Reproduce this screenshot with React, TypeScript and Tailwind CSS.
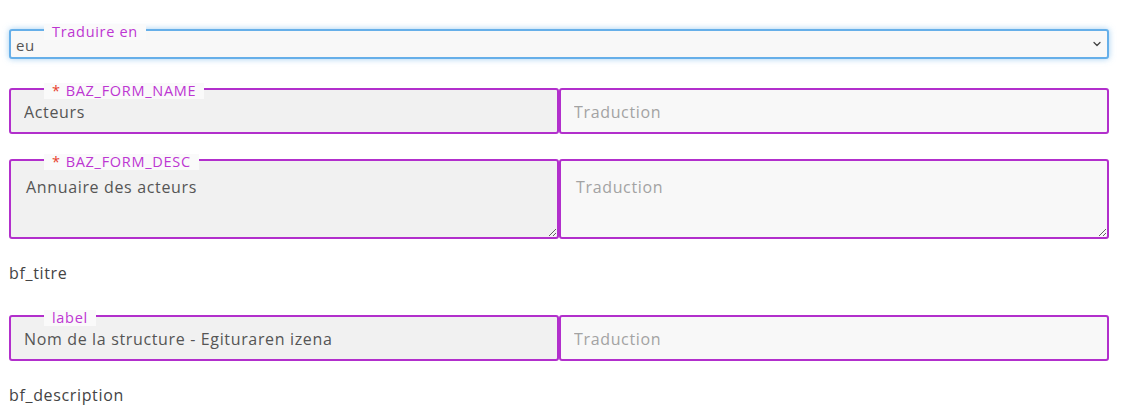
import { ChevronDown } from 'lucide-react';

const font = { fontFamily: '"Open Sans", "Liberation Sans", sans-serif' };

function Legend({ text, required }: { text: string; required?: boolean }) {
  return (
    <span className="absolute left-[35px] top-[-5px] z-10 bg-[#fafafa] px-2 text-[14.5px] leading-4 tracking-[0.7px] text-[#bd36d2]">
      {required && <span className="mr-[5px] text-[#e8412c]">*</span>}
      {text}
    </span>
  );
}

function Field({ label, required, value, multiline }: { label?: string; required?: boolean; value: string; multiline?: boolean }) {
  const box = 'block w-full rounded-[3px] border-2 border-[#b22fcc] text-[16px] tracking-[0.65px] text-[#555] outline-none placeholder:text-[#a3a3a3]';
  return (
    <div className="flex">
      <div className="relative w-[550px]">
        {label && <Legend text={label} required={required} />}
        {multiline ? (
          <textarea readOnly defaultValue={value} className={`${box} h-[80px] bg-[#f1f1f1] px-[15px] pt-[14px]`} />
        ) : (
          <input readOnly defaultValue={value} className={`${box} h-[46px] bg-[#f1f1f1] px-[13px] pt-[2px]`} />
        )}
      </div>
      <div className="w-[550px]">
        {multiline ? (
          <textarea placeholder="Traduction" className={`${box} h-[80px] bg-[#f8f8f8] px-[15px] pt-[14px]`} />
        ) : (
          <input placeholder="Traduction" className={`${box} h-[46px] bg-[#f8f8f8] px-[13px] pt-[2px]`} />
        )}
      </div>
    </div>
  );
}

export default function App() {
  return (
    <div className="min-h-[416px] bg-white px-[9px] pt-[29px]" style={font}>
      <div className="w-[1100px]">
        <div className="relative">
          <Legend text="Traduire en" />
          <select className="block h-[30px] w-full appearance-none rounded-[3px] border-2 border-[#66afe9] bg-[#f8f8f8] px-[5px] pt-[2px] text-[15px] tracking-[0.5px] text-[#555] shadow-[0_0_6px_rgba(102,175,233,0.6)] outline-none">
            <option>eu</option>
          </select>
          <ChevronDown className="pointer-events-none absolute right-[6px] top-[9px] h-3 w-3 text-[#444]" strokeWidth={2.5} />
        </div>

        <div className="mt-[29px]">
          <Field label="BAZ_FORM_NAME" required value="Acteurs" />
        </div>
        <div className="mt-[25px]">
          <Field label="BAZ_FORM_DESC" required value="Annuaire des acteurs" multiline />
        </div>
        <p className="mt-[22px] text-[16px] leading-6 tracking-[0.65px] text-[#444]">bf_titre</p>
        <div className="mt-[30px]">
          <Field label="label" value="Nom de la structure - Egituraren izena" />
        </div>
        <p className="mt-[22px] text-[16px] leading-6 tracking-[0.65px] text-[#444]">bf_description</p>
      </div>
    </div>
  );
}
